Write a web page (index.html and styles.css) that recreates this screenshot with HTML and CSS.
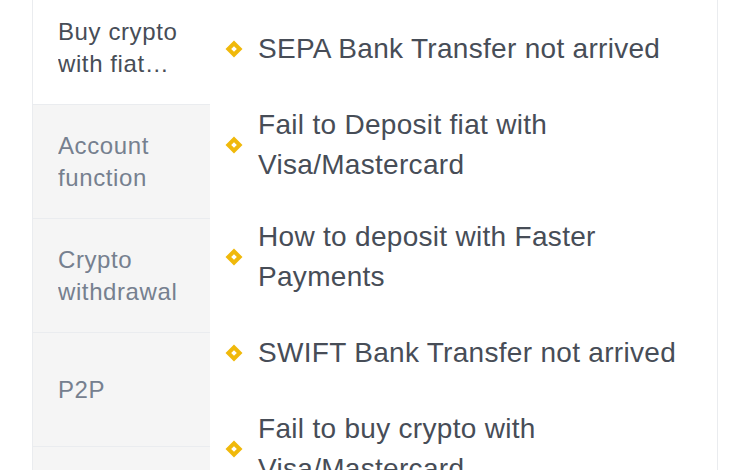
FILE: index.html
```html
<!DOCTYPE html>
<html lang="en">
<head>
<meta charset="utf-8">
<title>FAQ</title>
<link rel="stylesheet" href="styles.css">
</head>
<body>
<div class="faq">
  <nav class="tabs">
    <div class="tab active"><span class="label">Buy crypto with fiat currency</span></div>
    <div class="tab"><span class="label">Account function</span></div>
    <div class="tab"><span class="label">Crypto withdrawal</span></div>
    <div class="tab"><span class="label">P2P</span></div>
    <div class="tab"><span class="label">Crypto deposit</span></div>
  </nav>
  <ul class="list">
    <li class="item"><span class="dot"></span><span class="text">SEPA Bank Transfer not arrived</span></li>
    <li class="item"><span class="dot"></span><span class="text">Fail to Deposit fiat with Visa/Mastercard</span></li>
    <li class="item"><span class="dot"></span><span class="text">How to deposit with Faster Payments</span></li>
    <li class="item"><span class="dot"></span><span class="text">SWIFT Bank Transfer not arrived</span></li>
    <li class="item"><span class="dot"></span><span class="text">Fail to buy crypto with Visa/Mastercard</span></li>
  </ul>
</div>
</body>
</html>
```
FILE: styles.css
```css
* { box-sizing: border-box; }
html, body {
  margin: 0;
  padding: 0;
  background: #ffffff;
  overflow: hidden;
  height: 470px;
}
body {
  font-family: "Liberation Sans", Arial, sans-serif;
}
.faq {
  display: flex;
  margin: -9px 32px 0;
  border-left: 1px solid #eaecef;
  border-right: 1px solid #eaecef;
  min-height: 620px;
}
.tabs {
  width: 177px;
  flex: none;
  background: #f5f5f5;
}
.tab {
  display: flex;
  align-items: center;
  height: 114px;
  padding: 25px 8px 24px 25px;
  border-bottom: 1px solid #eaecef;
  font-size: 24px;
  line-height: 32px;
  letter-spacing: 0.6px;
  color: #76808f;
}
.tab.active {
  background: #ffffff;
  color: #474d57;
}
.label {
  display: -webkit-box;
  -webkit-line-clamp: 2;
  -webkit-box-orient: vertical;
  overflow: hidden;
}
.list {
  flex: 1;
  list-style: none;
  margin: 0;
  padding: 26px 16px 0 16px;
}
.item {
  display: flex;
  align-items: center;
  gap: 16px;
  min-height: 64px;
  padding: 8px 0;
  margin-bottom: 16px;
}
.dot {
  flex: none;
  width: 16px;
  height: 16px;
  display: flex;
  align-items: center;
  justify-content: center;
}
.dot::before {
  content: "";
  width: 4px;
  height: 4px;
  border: 4px solid #f0b90b;
  transform: rotate(45deg);
  box-sizing: content-box;
}
.text {
  font-size: 28px;
  line-height: 40px;
  letter-spacing: 0.3px;
  color: #474d57;
}
```
